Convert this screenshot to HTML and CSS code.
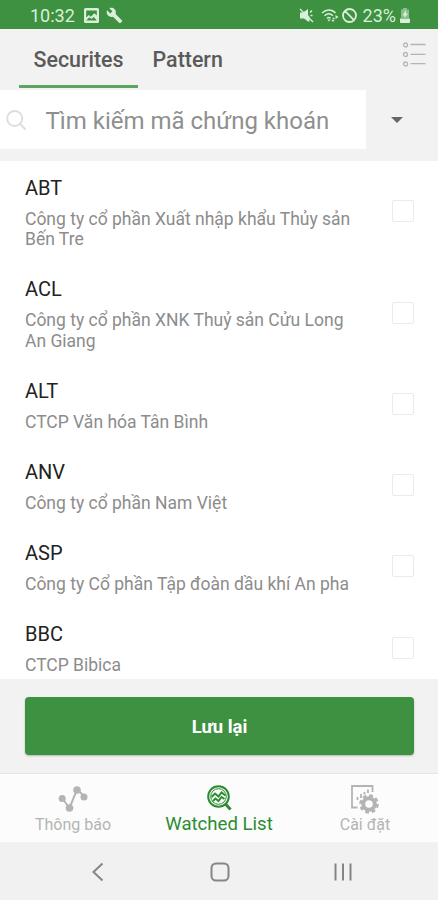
FILE: index.html
```html
<!DOCTYPE html>
<html lang="vi">
<head>
  <meta charset="UTF-8" />
  <meta name="viewport" content="width=device-width, initial-scale=1" />
  <title>Watched List</title>

  <link rel="stylesheet" href="styles.css">
</head>
<body>
  <div class="status-bar">
    <span class="clock">10:32</span>
    <svg class="status-picture" width="15" height="15" viewBox="0 0 15 15">
      <path fill-rule="evenodd" d="M1.500 0h12a1.500 1.500 0 0 1 1.500 1.500v12a1.500 1.500 0 0 1-1.500 1.500h-12A1.500 1.500 0 0 1 0 13.500v-12A1.500 1.500 0 0 1 1.500 0zM2.200 2.500v7l2.600-2.400 2 1.600 3.500-3.500 2.500 2.300v-5zM2.200 12.500h10.600l-3-3.500-2.400 2-2-1.800z"/>
    </svg>
    <svg class="status-wrench" width="17" height="17" viewBox="0 0 24 24">
      <path d="M22.700 19l-9.100-9.100c.9-2.300.4-5-1.500-6.900-2-2-5-2.400-7.400-1.300L9 6 6 9 1.600 4.700C.4 7.100.9 10.100 2.900 12.100c1.900 1.900 4.600 2.400 6.900 1.500l9.100 9.100c.4.4 1 .4 1.400 0l2.300-2.300c.5-.4.5-1.100.1-1.400z"/>
    </svg>
    <div class="status-right">
      <svg width="15" height="15" viewBox="0 0 15 15">
        <path d="M1 4.500h3L9 1v6l1.500 2v4.500L9 13.500 5 10.500H1z"/>
        <path class="line" d="M11 4.500l2-2M11.500 7.500h2M1 1l13 13"/>
      </svg>
      <svg class="status-wifi" width="18" height="15" viewBox="0 0 18 15">
        <path class="line" d="M1 5c4-4 10-4 13.500 0M3.500 7.800c2.600-2.500 6-2.500 8.500 0M6 10.300c1-1 2.500-1 3.500 0"/>
        <path d="M6.300 11.500L8 13.500l1.700-2zM11 11.200h3l-1.500-2zM14.500 7l3 2-3 2zM10.500 12h3L12 14z"/>
      </svg>
      <svg class="status-block" width="15" height="15" viewBox="0 0 15 15">
        <path class="line thick" d="M2.700 2.700l9.600 9.600M14 7.500a6.500 6.500 0 1 1-13 0a6.500 6.500 0 0 1 13 0z"/>
      </svg>
      <span class="battery-level">23%</span>
      <svg class="status-battery" width="10" height="15" viewBox="0 0 10 15">
        <path class="battery-empty" d="M3 0h4v1.500h2V10H1V1.500h2z"/>
        <path d="M0 10.500h10V14a1 1 0 0 1-1 1H1a1 1 0 0 1-1-1zM6 2L2.500 7.500h2V10L8 5.500H6z"/>
      </svg>
    </div>
  </div>

  <div class="tabs">
    <div class="tab active"><span>Securites</span></div>
    <div class="tab"><span>Pattern</span></div>
    <svg class="list-icon" width="24" height="26" viewBox="0 0 24 26">
      <circle cx="3.500" cy="4" r="2"/>
      <circle cx="3.500" cy="13.500" r="2"/>
      <circle cx="3.500" cy="23" r="2"/>
      <path d="M8.500 3.500h15M8.500 13.300h15M8.500 22.700h15"/>
    </svg>
  </div>

  <div class="search-row">
    <div class="search-box">
      <svg class="search-icon" width="21" height="21" viewBox="0 0 21 21">
        <circle cx="8.700" cy="8.500" r="7.500"/>
        <path d="M14.200 14l5.300 5.500"/>
      </svg>
      <span class="placeholder">Tìm kiếm mã chứng khoán</span>
    </div>
    <span class="caret"></span>
  </div>

  <ul class="stock-list">
    <li>
      <div class="stock">
        <div class="code">ABT</div>
        <div class="company">Công ty cổ phần Xuất nhập khẩu Thủy sản<br>Bến Tre</div>
      </div>
      <span class="checkbox"></span>
    </li>
    <li>
      <div class="stock">
        <div class="code">ACL</div>
        <div class="company">Công ty cổ phần XNK Thuỷ sản Cửu Long<br>An Giang</div>
      </div>
      <span class="checkbox"></span>
    </li>
    <li>
      <div class="stock">
        <div class="code">ALT</div>
        <div class="company">CTCP Văn hóa Tân Bình</div>
      </div>
      <span class="checkbox"></span>
    </li>
    <li>
      <div class="stock">
        <div class="code">ANV</div>
        <div class="company">Công ty cổ phần Nam Việt</div>
      </div>
      <span class="checkbox"></span>
    </li>
    <li>
      <div class="stock">
        <div class="code">ASP</div>
        <div class="company">Công ty Cổ phần Tập đoàn dầu khí An pha</div>
      </div>
      <span class="checkbox"></span>
    </li>
    <li>
      <div class="stock">
        <div class="code">BBC</div>
        <div class="company">CTCP Bibica</div>
      </div>
      <span class="checkbox"></span>
    </li>
  </ul>

  <div class="save-area">
    <button class="save-btn">Lưu lại</button>
  </div>

  <div class="bottom-nav">
    <div class="nav-item">
      <svg width="30" height="30" viewBox="0 0 30 30">
        <path class="trend" d="M4 14l7.500 10L19 5.500l7.500 7"/>
        <circle cx="4.200" cy="14.500" r="3.500"/>
        <circle cx="11.500" cy="24" r="3.800"/>
        <circle cx="19" cy="6" r="3.800"/>
        <circle cx="26" cy="13" r="3.500"/>
      </svg>
      <span>Thông báo</span>
    </div>
    <div class="nav-item active">
      <svg width="30" height="30" viewBox="0 0 30 30">
        <circle class="ring" cx="14.500" cy="12.500" r="10.300"/>
        <circle class="ring-inner" cx="14.500" cy="12.500" r="7.800"/>
        <path class="pulse" d="M7.500 13l3.500-3.500 3.500 3 3-4 4 3M9 17l2.500-2.500 3 2.500 3-4 3 2"/>
        <path class="handle" d="M21.500 20l5 5.500"/>
      </svg>
      <span>Watched List</span>
    </div>
    <div class="nav-item">
      <svg width="30" height="30" viewBox="0 0 30 30">
        <path class="frame" d="M7.500 23.500H2V2h20.500v6"/>
        <path class="bars" d="M7.500 16v-3M11 14v-4M14.500 10.500V8M18 9V5.500"/>
        <circle class="gear-teeth" cx="19" cy="20" r="8.300"/>
        <circle class="gear" cx="19" cy="20" r="5.800"/>
      </svg>
      <span>Cài đặt</span>
    </div>
  </div>

  <div class="system-bar">
    <svg width="146" height="24" viewBox="0 0 146 24">
      <path d="M102.500 3.500L93.500 12l9 8.500"/>
    </svg>
    <svg width="146" height="24" viewBox="0 0 146 24">
      <rect x="65.500" y="3.500" width="17" height="17" rx="4.500"/>
    </svg>
    <svg width="146" height="24" viewBox="0 0 146 24">
      <path d="M43.500 3.500v17M51 3.500v17M58.500 3.500v17"/>
    </svg>
  </div>
</body>
</html>
```
FILE: styles.css
```css
* {
  box-sizing: border-box;
}

body {
  display: flex;
  flex-direction: column;
  width: 438px;
  height: 900px;
  margin: 0;
  overflow: hidden;
  font-family: Roboto, sans-serif;
  background-color: #f2f2f2;
}

svg {
  display: block;
  flex: none;
}

.status-bar {
  display: flex;
  align-items: center;
  height: 29px;
  padding: 2px 28px 0 30px;
  background-color: #3d9140;
  color: #d9efd9;
  fill: #d9efd9;
  font-size: 18px;
}

.clock {
  width: 54px;
}

.status-wrench {
  margin-left: 7px;
}

.status-right {
  display: flex;
  align-items: center;
  margin-left: auto;
}

.status-right .line {
  fill: none;
  stroke: #d9efd9;
  stroke-width: 1.4;
}

.status-right .thick {
  stroke-width: 1.8;
}

.status-wifi {
  margin-left: 7px;
}

.status-block {
  margin-left: 3px;
}

.battery-level {
  margin-left: 6px;
}

.status-battery {
  margin-left: 4px;
}

.battery-empty {
  opacity: 0.5;
}

.tabs {
  display: flex;
  height: 60px;
  padding: 0 12px 0 19px;
}

.tab {
  height: 59px;
  padding: 17px 14.5px 0;
  color: #5a5a5a;
  font-size: 21.4px;
  font-weight: 500;
  line-height: 27px;
}

.tab.active {
  border-bottom: 3px solid #5ba560;
}

.list-icon {
  margin: 12px 0 0 auto;
  fill: none;
  stroke: #b5b5b5;
  stroke-width: 1.3;
}

.search-row {
  display: flex;
  align-items: center;
  height: 72px;
  padding: 1px 0 12px;
}

.search-box {
  display: flex;
  align-items: center;
  width: 366px;
  height: 59px;
  padding: 2px 0 0 6px;
  background-color: #fff;
}

.search-icon {
  fill: none;
  stroke: #ddd;
  stroke-width: 1.9;
}

.placeholder {
  margin-left: 18.5px;
  color: #8f8f8f;
  font-size: 24px;
}

.caret {
  margin-left: 25px;
  border: 6px solid transparent;
  border-top-color: #666;
  border-bottom: 0;
}

.stock-list {
  height: 518px;
  margin: 0;
  padding: 0;
  overflow: hidden;
  list-style: none;
  background-color: #fff;
}

.stock-list li {
  display: flex;
  align-items: center;
  justify-content: space-between;
  padding: 14px 24px 13px 25px;
}

.code {
  color: #222;
  font-size: 20px;
  line-height: 26px;
}

.company {
  padding-top: 8px;
  color: #8c8c8c;
  font-size: 17.5px;
  line-height: 20.2px;
}

.checkbox {
  width: 22px;
  height: 22px;
  margin-bottom: 2px;
  border: 1px solid #ebebeb;
  border-radius: 2px;
}

.save-area {
  height: 94px;
  padding: 18px 24px 0 25px;
}

.save-btn {
  display: block;
  width: 100%;
  height: 58px;
  padding: 2px 0 0;
  border: none;
  border-radius: 4px;
  background-color: #3d9140;
  box-shadow: 0 1px 2px rgba(0, 0, 0, 0.25);
  color: #fff;
  font-family: inherit;
  font-size: 18.5px;
  font-weight: 700;
}

.bottom-nav {
  display: flex;
  height: 69px;
  border-top: 1px solid #e6e6e6;
  background-color: #fcfcfc;
}

.nav-item {
  display: flex;
  flex: 1;
  flex-direction: column;
  align-items: center;
  padding-top: 10px;
  color: #b4b4b4;
  fill: #b4b4b4;
  stroke: #b4b4b4;
  font-size: 16px;
}

.nav-item span {
  line-height: 22px;
}

.nav-item circle {
  stroke: none;
}

.nav-item .trend {
  fill: none;
  stroke-width: 2;
}

.nav-item.active {
  color: #2c8c31;
  font-size: 18.6px;
}

.nav-item.active span {
  line-height: 20px;
}

.nav-item .ring,
.nav-item .ring-inner,
.pulse,
.handle {
  fill: none;
  stroke: #2c8c31;
  stroke-width: 2;
}

.nav-item .ring-inner {
  stroke-width: 1;
}

.nav-item .handle {
  stroke-width: 3;
}

.frame,
.bars {
  fill: none;
  stroke-width: 1.8;
}

.nav-item .gear-teeth {
  fill: none;
  stroke: #b4b4b4;
  stroke-width: 3;
  stroke-dasharray: 3.6 2.92;
}

.nav-item .gear {
  fill: #fcfcfc;
  stroke: #b4b4b4;
  stroke-width: 4;
}

.system-bar {
  display: flex;
  align-items: center;
  height: 58px;
  padding-top: 2px;
  background-color: #f1f1f1;
  fill: none;
  stroke: #858585;
  stroke-width: 2;
}
```
